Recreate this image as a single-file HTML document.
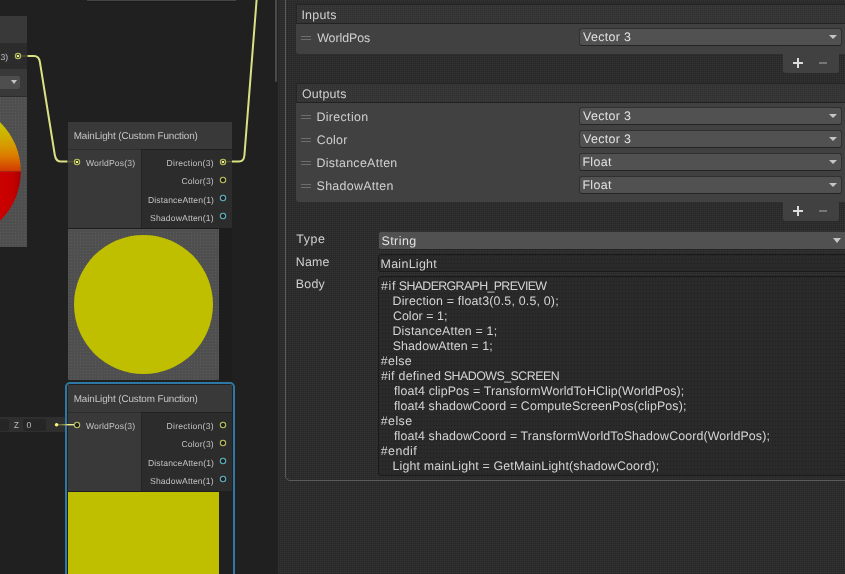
<!DOCTYPE html>
<html>
<head>
<meta charset="utf-8">
<title>Shader Graph</title>
<style>
html,body{margin:0;padding:0;}
body{width:845px;height:574px;overflow:hidden;background:#202020;position:relative;font-family:"Liberation Sans",sans-serif;color:#c8c8c8;}
.a{position:absolute;}
.t{position:absolute;white-space:pre;line-height:1;text-rendering:geometricPrecision;}
.nh{background:#393939;}
.ni{background:#393939;}
.no{background:#2c2c2c;}
.nt{color:#c6c6c6;}
.pt{color:#c2c2c2;}
.lb{color:#d0d0d0;}
.ddt{color:#e2e2e2;}
.code{color:#d4d4d4;}
.dd{position:absolute;background:#515151;border:1px solid #303030;border-bottom-color:#242424;border-radius:3px;box-sizing:border-box;}
.tri{position:absolute;width:0;height:0;border-left:4px solid transparent;border-right:4px solid transparent;border-top:4.5px solid #c6c6c6;}
.pv{background-color:#4f4f4f;background-image:linear-gradient(180deg,transparent 1px,#4f4f4f 1px),linear-gradient(90deg,#5b5b5b 1px,transparent 1px);background-size:3px 3px;}
.dp{background-color:#2a2a2a;background-image:linear-gradient(180deg,transparent 1px,#2a2a2a 1px),linear-gradient(90deg,#353535 1px,transparent 1px);background-size:2px 2px;}
.hd{position:absolute;background-color:#333;background-image:linear-gradient(180deg,transparent 1px,#333 1px),linear-gradient(90deg,#3c3c3c 1px,transparent 1px);background-size:2px 2px;border-top:1px solid #232323;border-bottom:1px solid #232323;border-left:1px solid #262626;box-sizing:border-box;}
.rows{position:absolute;background:#414141;border-radius:0 0 0 3px;}
.grip{position:absolute;width:10px;height:4px;border-top:1px solid #6c6c6c;border-bottom:1px solid #6c6c6c;box-sizing:border-box;}
.ft{position:absolute;background:#414141;border-radius:0 0 3px 3px;}
.fld{position:absolute;background-color:#2a2a2a;background-image:linear-gradient(180deg,transparent 1px,#2a2a2a 1px),linear-gradient(90deg,#1e1e1e 1px,transparent 1px);background-size:3px 4px;border:1px solid #1b1b1b;border-radius:3px;box-sizing:border-box;}
</style>
</head>
<body>
<div class="a" style="left:0;top:0;width:845px;height:574px;will-change:transform;overflow:hidden;">
<!-- ===== GRAPH AREA ===== -->
<div class="a" style="left:87px;top:0;width:148.5px;height:1px;background:#454545;"></div><div class="a" style="left:87px;top:1px;width:148.5px;height:1px;background:#1b1b1b;"></div>

<!-- left partial node -->
<div class="a nh" style="left:0;top:16px;width:27px;height:27px;"></div>
<div class="a no" style="left:0;top:43px;width:27px;height:26px;"></div>
<div class="t pt" style="left:0.6px;top:53px;font-size:8.6px;">3)</div>
<svg class="a" style="left:13px;top:51px;" width="10" height="10" viewBox="-5 -5 10 10"><circle r="2.7" fill="#3b3c2c" stroke="#b9bf5e" stroke-width="1.1"/><rect x="-1.1" y="-1.1" width="2.2" height="2.2" rx="0.6" fill="#f8fb86"/></svg>
<div class="a ni" style="left:0;top:69px;width:27px;height:28px;"></div>
<div class="a" style="left:0;top:76px;width:20px;height:12.5px;background:#4e4e4e;border-radius:0 2px 2px 0;"></div>
<div class="a" style="left:10.5px;top:80px;width:0;height:0;border-left:3.5px solid transparent;border-right:3.5px solid transparent;border-top:4px solid #c4c4c4;"></div>
<div class="a" style="left:0;top:96px;width:27px;height:1px;background:#2b2b2b;"></div>
<div class="a pv" style="left:0;top:97px;width:27px;height:150px;overflow:hidden;">
  <svg class="a" style="left:0;top:0;" width="27" height="150" viewBox="0 97 27 150">
    <defs>
      <linearGradient id="sg" x1="0" x2="0" y1="122" y2="171.5" gradientUnits="userSpaceOnUse">
        <stop offset="0" stop-color="#c6c800"/><stop offset="0.27" stop-color="#cfb000"/><stop offset="0.47" stop-color="#d69a00"/><stop offset="0.68" stop-color="#dc7c00"/><stop offset="0.85" stop-color="#d85800"/><stop offset="1" stop-color="#d03800"/>
      </linearGradient>
      <linearGradient id="sr" x1="0" x2="21" y1="0" y2="0" gradientUnits="userSpaceOnUse">
        <stop offset="0" stop-color="#cc0000"/><stop offset="0.6" stop-color="#c40000"/><stop offset="1" stop-color="#a80000"/>
      </linearGradient>
      <clipPath id="sc"><circle cx="-48.2" cy="171.5" r="69"/></clipPath>
    </defs>
    <g clip-path="url(#sc)">
      <rect x="-1" y="100" width="30" height="71.5" fill="url(#sg)"/>
      <rect x="-1" y="171.5" width="30" height="72" fill="url(#sr)"/>
    </g>
  </svg>
</div>

<!-- nodes -->
<div class="a" style="left:68px;top:122px;width:164px;height:258px;background:#1d1d1d;border-radius:2px;"></div>
<div class="a nh" style="left:68px;top:122px;width:164px;height:27px;"></div>
<div class="a" style="left:68px;top:149px;width:73px;height:1px;background:#2d2d2d;"></div><div class="a" style="left:141px;top:149px;width:91px;height:1px;background:#202020;"></div>
<div class="t nt" style="left:73.66px;top:132.0px;font-size:9.9px;letter-spacing:-0.098px;">MainLight (Custom Function)</div>
<div class="a ni" style="left:68px;top:150px;width:73px;height:78px;"></div>
<div class="a no" style="left:141px;top:150px;width:91px;height:78px;"></div>
<div class="a" style="left:141px;top:150px;width:1px;height:78px;background:#242424;"></div>
<svg class="a" style="left:72px;top:156.8px;" width="10" height="10" viewBox="-5 -5 10 10"><circle r="2.7" fill="#3b3c2c" stroke="#b9bf5e" stroke-width="1.1"/><rect x="-1.1" y="-1.1" width="2.2" height="2.2" rx="0.6" fill="#f8fb86"/></svg>
<div class="t pt" style="left:86.00px;top:159.0px;font-size:8.6px;letter-spacing:0.139px;">WorldPos(3)</div>
<div class="t pt" style="left:166.59px;top:159.0px;font-size:8.6px;letter-spacing:0.237px;">Direction(3)</div>
<div class="t pt" style="left:181.43px;top:177.0px;font-size:8.6px;letter-spacing:0.176px;">Color(3)</div>
<div class="t pt" style="left:147.99px;top:196.0px;font-size:8.6px;letter-spacing:0.130px;">DistanceAtten(1)</div>
<div class="t pt" style="left:150.07px;top:214.0px;font-size:8.6px;letter-spacing:0.147px;">ShadowAtten(1)</div>
<svg class="a" style="left:218px;top:156.8px;" width="10" height="10" viewBox="-5 -5 10 10"><circle r="2.7" fill="#3b3c2c" stroke="#b9bf5e" stroke-width="1.1"/><rect x="-1.1" y="-1.1" width="2.2" height="2.2" rx="0.6" fill="#f8fb86"/></svg>
<svg class="a" style="left:218px;top:175px;" width="10" height="10" viewBox="-5 -5 10 10"><circle r="2.7" fill="#1f1f1f" stroke="#b9bf5e" stroke-width="1.1"/></svg>
<svg class="a" style="left:218px;top:193.1px;" width="10" height="10" viewBox="-5 -5 10 10"><circle r="2.7" fill="#1f1f1f" stroke="#5fb0bc" stroke-width="1.1"/></svg>
<svg class="a" style="left:218px;top:211px;" width="10" height="10" viewBox="-5 -5 10 10"><circle r="2.7" fill="#1f1f1f" stroke="#5fb0bc" stroke-width="1.1"/></svg>
<div class="a pv" style="left:68px;top:229px;width:151px;height:151px;border-radius:0 0 1px 1px;"></div>
<div class="a" style="left:73.8px;top:234.5px;width:139.3px;height:139.3px;border-radius:50%;background:#bfbf00;"></div>

<div class="a" style="left:0;top:417px;width:66px;height:14.5px;background:#2f2f2f;"></div>
<div class="a" style="left:-3px;top:418.5px;width:12px;height:12px;background:#262626;border-radius:2px;"></div>
<div class="t pt" style="left:13.6px;top:421px;font-size:8.6px;transform:scaleX(0.9);transform-origin:0 0;">Z</div>
<div class="a" style="left:23px;top:418.5px;width:23px;height:12px;background:#262626;border-radius:2px;"></div>
<div class="t pt" style="left:26.5px;top:421px;font-size:8.6px;">0</div>

<div class="a" style="left:65px;top:381.8px;width:169.6px;height:210px;border:2px solid #2e78a6;border-radius:5px;box-sizing:border-box;"></div>
<div class="a nh" style="left:68px;top:385px;width:164px;height:27px;"></div>
<div class="a" style="left:68px;top:412px;width:73px;height:1px;background:#2d2d2d;"></div><div class="a" style="left:141px;top:412px;width:91px;height:1px;background:#202020;"></div>
<div class="t nt" style="left:73.66px;top:395.0px;font-size:9.9px;letter-spacing:-0.098px;">MainLight (Custom Function)</div>
<div class="a ni" style="left:68px;top:413px;width:73px;height:78px;"></div>
<div class="a no" style="left:141px;top:413px;width:91px;height:78px;"></div>
<div class="a" style="left:141px;top:413px;width:1px;height:78px;background:#242424;"></div>
<svg class="a" style="left:72px;top:419.8px;" width="10" height="10" viewBox="-5 -5 10 10"><circle r="2.7" fill="#1f1f1f" stroke="#b9bf5e" stroke-width="1.1"/></svg>
<div class="t pt" style="left:86.00px;top:422.0px;font-size:8.6px;letter-spacing:0.139px;">WorldPos(3)</div>
<div class="t pt" style="left:166.59px;top:422.0px;font-size:8.6px;letter-spacing:0.237px;">Direction(3)</div>
<div class="t pt" style="left:181.43px;top:440.0px;font-size:8.6px;letter-spacing:0.176px;">Color(3)</div>
<div class="t pt" style="left:147.99px;top:459.0px;font-size:8.6px;letter-spacing:0.130px;">DistanceAtten(1)</div>
<div class="t pt" style="left:150.07px;top:477.0px;font-size:8.6px;letter-spacing:0.147px;">ShadowAtten(1)</div>
<svg class="a" style="left:218px;top:419.8px;" width="10" height="10" viewBox="-5 -5 10 10"><circle r="2.7" fill="#1f1f1f" stroke="#b9bf5e" stroke-width="1.1"/></svg>
<svg class="a" style="left:218px;top:438px;" width="10" height="10" viewBox="-5 -5 10 10"><circle r="2.7" fill="#1f1f1f" stroke="#b9bf5e" stroke-width="1.1"/></svg>
<svg class="a" style="left:218px;top:456.1px;" width="10" height="10" viewBox="-5 -5 10 10"><circle r="2.7" fill="#1f1f1f" stroke="#5fb0bc" stroke-width="1.1"/></svg>
<svg class="a" style="left:218px;top:474px;" width="10" height="10" viewBox="-5 -5 10 10"><circle r="2.7" fill="#1f1f1f" stroke="#5fb0bc" stroke-width="1.1"/></svg>
<div class="a" style="left:68px;top:492px;width:151px;height:82px;background:#bfbf00;"></div>

<!-- edges -->
<svg class="a" style="left:0;top:0;" width="290" height="574" viewBox="0 0 290 574" fill="none">
  <defs>
    <linearGradient id="g1" x1="21" x2="28" y1="0" y2="0" gradientUnits="userSpaceOnUse"><stop offset="0" stop-color="#5a5c38"/><stop offset="1" stop-color="#7a7d46"/></linearGradient>
    <linearGradient id="g2" x1="58" x2="74" y1="0" y2="0" gradientUnits="userSpaceOnUse"><stop offset="0" stop-color="#5a5d36"/><stop offset="0.4" stop-color="#8f9455"/><stop offset="0.62" stop-color="#e6ec8c"/><stop offset="1" stop-color="#e6ec8c"/></linearGradient>
  </defs>
  <path d="M21 56 H27" stroke="#55582f" stroke-width="1.3"/>
  <path d="M27.5 56 H34 Q39 56 39.9 62 L54.8 155 Q55.9 161.6 61 161.6 H67.5" stroke="#dae184" stroke-width="2"/>
  <path d="M67.5 161.6 H74" stroke="#55582f" stroke-width="1.3"/>
  <path d="M226 161.6 H232" stroke="#55582f" stroke-width="1.3"/>
  <path d="M232 161.5 H239 Q243.8 161.5 244.4 155.5 L256.6 0" stroke="#dae184" stroke-width="2"/>
  <path d="M58 424.7 H74" stroke="url(#g2)" stroke-width="1.4"/>
  <circle cx="56.6" cy="424.7" r="1.8" fill="#f5f87a"/>
</svg>

<!-- scrollbar / divider -->
<div class="a" style="left:275px;top:0;width:2px;height:82px;background:#4a4a4a;border-radius:0 0 1px 1px;"></div>
<div class="a dp" style="left:278px;top:0;width:567px;height:574px;"></div>

<!-- ===== INSPECTOR PANEL ===== -->
<div class="a" style="left:285px;top:-10px;width:580px;height:491px;border:1px solid #5c5c5c;border-radius:5px;box-sizing:border-box;"></div>

<!-- Inputs -->
<div class="hd" style="left:296px;top:4px;width:560px;height:20px;"></div>
<div class="t lb" style="left:301.45px;top:9.0px;font-size:12.4px;letter-spacing:0.244px;">Inputs</div>
<div class="rows" style="left:296px;top:24px;width:560px;height:30px;"></div>
<div class="grip" style="left:301px;top:36px;"></div>
<div class="t lb" style="left:317.16px;top:32.0px;font-size:12.4px;letter-spacing:-0.055px;">WorldPos</div>
<div class="dd" style="left:579px;top:28px;width:263px;height:18px;"></div><div class="t ddt" style="left:583.05px;top:31.0px;font-size:12.4px;letter-spacing:0.330px;">Vector 3</div><div class="tri" style="left:829px;top:35px;"></div>
<div class="ft" style="left:783px;top:54px;width:56px;height:19px;"></div>

<!-- Outputs -->
<div class="hd" style="left:296px;top:83px;width:560px;height:20px;"></div>
<div class="t lb" style="left:301.96px;top:88.0px;font-size:12.4px;letter-spacing:0.179px;">Outputs</div>
<div class="rows" style="left:296px;top:103px;width:560px;height:99px;"></div>
<div class="grip" style="left:301px;top:115px;"></div><div class="grip" style="left:301px;top:138px;"></div><div class="grip" style="left:301px;top:161px;"></div><div class="grip" style="left:301px;top:184px;"></div>
<div class="t lb" style="left:316.40px;top:111.0px;font-size:12.4px;letter-spacing:0.363px;">Direction</div><div class="t lb" style="left:316.82px;top:134.0px;font-size:12.4px;letter-spacing:0.236px;">Color</div><div class="t lb" style="left:316.40px;top:157.0px;font-size:12.4px;letter-spacing:0.310px;">DistanceAtten</div><div class="t lb" style="left:316.61px;top:180.0px;font-size:12.4px;letter-spacing:0.299px;">ShadowAtten</div>
<div class="dd" style="left:579px;top:107px;width:263px;height:18px;"></div><div class="t ddt" style="left:583.05px;top:110.0px;font-size:12.4px;letter-spacing:0.330px;">Vector 3</div><div class="tri" style="left:829px;top:114px;"></div>
<div class="dd" style="left:579px;top:130px;width:263px;height:18px;"></div><div class="t ddt" style="left:583.05px;top:133.0px;font-size:12.4px;letter-spacing:0.330px;">Vector 3</div><div class="tri" style="left:829px;top:137px;"></div>
<div class="dd" style="left:579px;top:153px;width:263px;height:18px;"></div><div class="t ddt" style="left:582.40px;top:156.0px;font-size:12.4px;letter-spacing:0.406px;">Float</div><div class="tri" style="left:829px;top:160px;"></div>
<div class="dd" style="left:579px;top:176px;width:263px;height:18px;"></div><div class="t ddt" style="left:582.40px;top:179.0px;font-size:12.4px;letter-spacing:0.406px;">Float</div><div class="tri" style="left:829px;top:183px;"></div>
<div class="ft" style="left:783px;top:202px;width:56px;height:19px;"></div>

<!-- plus / minus -->
<svg class="a" style="left:783px;top:54px;" width="56" height="19"><path d="M10 9H20M15 4V14" stroke="#dcdcdc" stroke-width="2"/><path d="M36 9H44" stroke="#8a8a8a" stroke-width="1.5"/></svg>
<svg class="a" style="left:783px;top:202px;" width="56" height="19"><path d="M10 9H20M15 4V14" stroke="#dcdcdc" stroke-width="2"/><path d="M36 9H44" stroke="#8a8a8a" stroke-width="1.5"/></svg>

<!-- Type / Name / Body -->
<div class="t lb" style="left:296.26px;top:233.0px;font-size:12.4px;letter-spacing:0.591px;">Type</div><div class="t lb" style="left:295.80px;top:256.0px;font-size:12.4px;letter-spacing:0.179px;">Name</div><div class="t lb" style="left:295.80px;top:278.0px;font-size:12.4px;letter-spacing:0.252px;">Body</div>
<div class="dd" style="left:378px;top:231px;width:480px;height:19px;"></div>
<div class="t ddt" style="left:381.41px;top:235.0px;font-size:12.4px;letter-spacing:0.492px;">String</div>
<div class="tri" style="left:833px;top:238px;border-left-width:4.5px;border-right-width:4.5px;border-top-width:5px;"></div>
<div class="fld" style="left:378px;top:254px;width:480px;height:18px;"></div>
<div class="t code" style="left:380.50px;top:258.0px;font-size:12.4px;letter-spacing:0.318px;">MainLight</div>
<div class="fld" style="left:378px;top:276px;width:480px;height:200px;"></div>
<div class="t code" style="left:380.89px;top:280.0px;font-size:12.4px;letter-spacing:0.770px;">#if</div>
<div class="t code" style="left:392.50px;top:295.0px;font-size:12.4px;letter-spacing:0.193px;">Direction = float3(0.5, 0.5, 0);</div>
<div class="t code" style="left:392.92px;top:310.0px;font-size:12.4px;letter-spacing:0.052px;">Color = 1;</div>
<div class="t code" style="left:392.50px;top:325.0px;font-size:12.4px;letter-spacing:0.175px;">DistanceAtten = 1;</div>
<div class="t code" style="left:392.71px;top:340.0px;font-size:12.4px;letter-spacing:0.125px;">ShadowAtten = 1;</div>
<div class="t code" style="left:380.79px;top:355.0px;font-size:12.4px;letter-spacing:0.333px;">#else</div>
<div class="t code" style="left:380.89px;top:370.0px;font-size:12.4px;letter-spacing:0.280px;">#if defined</div>
<div class="t code" style="left:394.02px;top:385.0px;font-size:12.4px;letter-spacing:0.123px;">float4 clipPos = TransformWorldToHClip(WorldPos);</div>
<div class="t code" style="left:394.02px;top:400.0px;font-size:12.4px;letter-spacing:0.119px;">float4 shadowCoord = ComputeScreenPos(clipPos);</div>
<div class="t code" style="left:380.79px;top:415.0px;font-size:12.4px;letter-spacing:0.407px;">#else</div>
<div class="t code" style="left:394.02px;top:430.0px;font-size:12.4px;letter-spacing:0.117px;">float4 shadowCoord = TransformWorldToShadowCoord(WorldPos);</div>
<div class="t code" style="left:380.79px;top:445.0px;font-size:12.4px;letter-spacing:0.408px;">#endif</div>
<div class="t code" style="left:392.50px;top:460.0px;font-size:12.4px;letter-spacing:0.155px;">Light mainLight = GetMainLight(shadowCoord);</div><div class="t code" style="left:398.81px;top:280.0px;font-size:12.4px;letter-spacing:-0.640px;">SHADERGRAPH_PREVIEW</div><div class="t code" style="left:443.81px;top:370.0px;font-size:12.4px;letter-spacing:-0.519px;">SHADOWS_SCREEN</div>
</div>
</body>
</html>
